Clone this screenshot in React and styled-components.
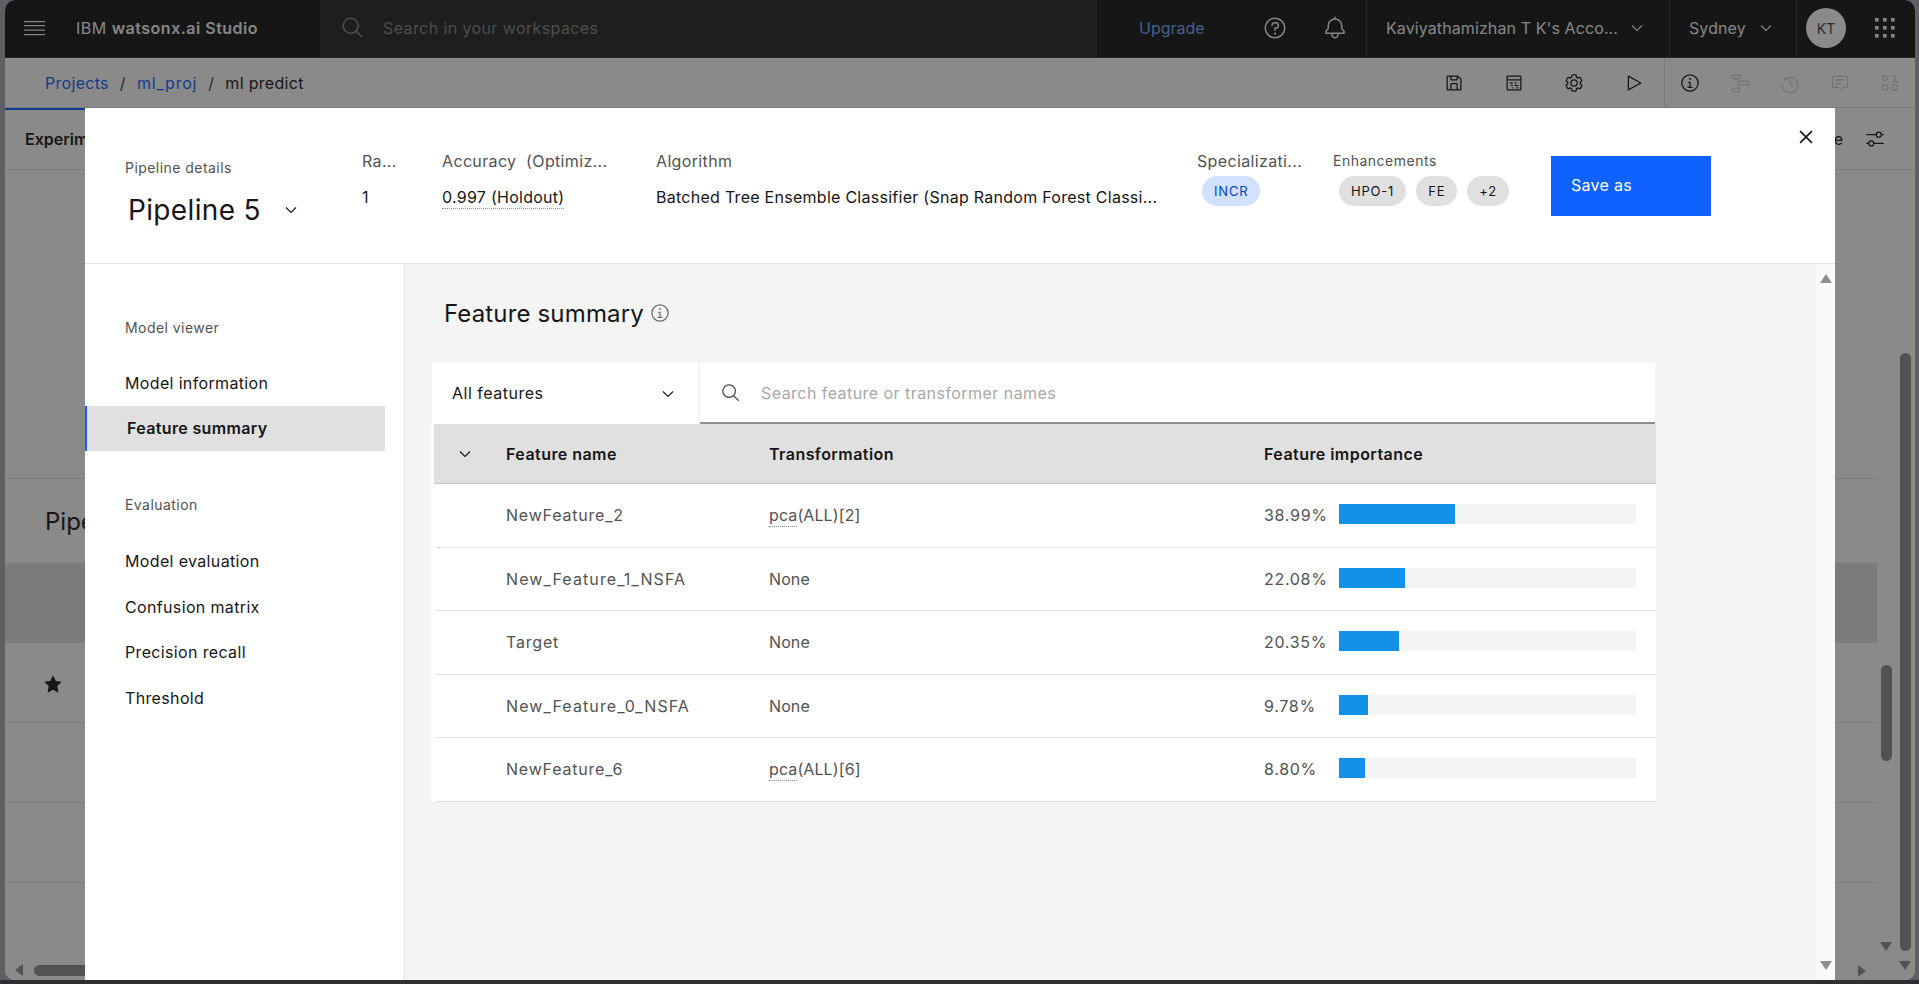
import React from 'react'
import styled, { createGlobalStyle } from 'styled-components'

const GlobalStyle = createGlobalStyle`
  html, body {
    margin: 0;
    padding: 0;
    background: #2f2f33;
    font-family: Inter, Roboto, "Liberation Sans", sans-serif;
    color: #161616;
    overflow: hidden;
  }
  * { box-sizing: border-box; }
`

/* ---------- page behind the dialog ---------- */

const Shell = styled.div`
  width: 1919px;
  height: 980px;
  padding-left: 5px;
  padding-right: 4px;
  background: #5e5e64;
`
const Window = styled.div`
  position: relative;
  height: 980px;
  background: #fff;
  border-radius: 10px 10px 10px 10px;
  overflow: hidden;
`
const TopBar = styled.header`
  display: flex;
  height: 58px;
  background: #161616;
  border-bottom: 1px solid #393939;
  color: #f4f4f4;
`
const Brand = styled.div`
  display: flex;
  align-items: center;
  flex: none;
  width: 315px;
  padding: 0 0 1px 19px;
  gap: 31px;
  font-size: 16px;
  letter-spacing: 0.5px;
  b { font-weight: 600; }
`
const GlobalSearch = styled.div`
  display: flex;
  align-items: center;
  flex: none;
  width: 777px;
  gap: 18px;
  padding: 0 0 1px 21px;
  background: #262626;
  font-size: 16px;
  letter-spacing: 0.4px;
  color: #868686;
`
const Actions = styled.div`
  display: flex;
  align-items: center;
  flex: none;
  width: 269px;
  padding: 0 0 1px 42px;
`
const Upgrade = styled.a`
  width: 106px;
  font-size: 16px;
  color: #78a9ff;
`
const BarButton = styled.span`
  display: flex;
  align-items: center;
  justify-content: center;
  width: 60px;
`
const BarCell = styled.div`
  display: flex;
  align-items: center;
  justify-content: space-between;
  flex: none;
  width: ${p => p.$width}px;
  padding: 0 ${p => p.$right}px 1px 19px;
  border-left: 1px solid #393939;
  font-size: 16px;
  letter-spacing: 0.1px;
`
const UserCell = styled.div`
  display: flex;
  align-items: center;
  flex: 1;
  padding: 0 0 1px 9px;
  border-left: 1px solid #393939;
  svg { margin-left: 29px; }
`
const Avatar = styled.span`
  display: flex;
  align-items: center;
  justify-content: center;
  width: 40px;
  height: 40px;
  border-radius: 50%;
  background: #fff;
  color: #404040;
  font-size: 14px;
`
const SubBar = styled.div`
  display: flex;
  align-items: center;
  justify-content: space-between;
  height: 50px;
  padding-left: 40px;
  border-bottom: 1px solid #e0e0e0;
`
const Breadcrumb = styled.nav`
  display: flex;
  gap: 11px;
  font-size: 16px;
  letter-spacing: 0.3px;
`
const Crumb = styled.a`
  color: #0f62fe;
`
const ProjectCrumb = styled(Crumb)`
  letter-spacing: 0.8px;
`
const Slash = styled.span`
  color: #404040;
`
const Tools = styled.div`
  display: flex;
  align-items: center;
  height: 100%;
`
const ToolGroup = styled.div`
  display: flex;
  height: 100%;
  ${p => p.$divided && 'border-left: 1px solid #e0e0e0;'}
`
const Tool = styled.span`
  display: flex;
  align-items: center;
  justify-content: center;
  width: ${p => p.$width}px;
  color: ${p => (p.$disabled ? '#d0d0d0' : '#161616')};
`
const TabRow = styled.div`
  display: flex;
  align-items: center;
  justify-content: space-between;
  height: 62px;
  padding: 0 30px 0 20px;
  border-bottom: 1px solid #e0e0e0;
`
const TabLabel = styled.div`
  font-size: 16px;
  font-weight: 600;
`
const ActiveLine = styled.div`
  position: absolute;
  left: 0;
  top: 108px;
  width: 90px;
  height: 2px;
  background: #0f62fe;
`
const TabTools = styled.div`
  display: flex;
  align-items: center;
  gap: 22px;
  font-size: 16px;
  color: #161616;
`
const Overview = styled.div`
  height: 309px;
  margin-right: 38px;
  border-bottom: 1px solid #e0e0e0;
`
const Leaderboard = styled.section`
  margin-right: 38px;
`
const BoardTitle = styled.h2`
  height: 84px;
  margin: 0;
  padding: 27px 0 0 40px;
  font-size: 24px;
  font-weight: 400;
  line-height: 32px;
`
const BoardHead = styled.div`
  height: 80px;
  background: #e0e0e0;
`
const BoardRow = styled.div`
  display: flex;
  align-items: center;
  height: 80px;
  padding: 3px 0 0 38px;
  border-bottom: 1px solid #e0e0e0;
`
const Thumb = styled.div`
  position: absolute;
  background: #8e8e8e;
  border-radius: 6px;
  left: ${p => p.$x}px;
  top: ${p => p.$y}px;
  width: ${p => p.$w}px;
  height: ${p => p.$h}px;
`
const Arrow = styled.span`
  position: absolute;
  left: ${p => p.$x}px;
  top: ${p => p.$y}px;
  width: 0;
  height: 0;
  ${p => p.$dir === 'down' && 'border-left: 6px solid transparent; border-right: 6px solid transparent; border-top: 9px solid #8e8e8e;'}
  ${p => p.$dir === 'left' && 'border-top: 6px solid transparent; border-bottom: 6px solid transparent; border-right: 8px solid #8e8e8e;'}
  ${p => p.$dir === 'right' && 'border-top: 6px solid transparent; border-bottom: 6px solid transparent; border-left: 8px solid #8e8e8e;'}
`
const Overlay = styled.div`
  position: absolute;
  inset: 0;
  background: rgba(22, 22, 22, 0.5);
`

/* ---------- dialog ---------- */

const Modal = styled.div`
  position: absolute;
  left: 80px;
  right: 80px;
  top: 108px;
  bottom: 0;
  display: flex;
  flex-direction: column;
  background: #fff;
`
const ModalHead = styled.div`
  position: relative;
  display: flex;
  align-items: flex-start;
  height: 156px;
  padding: 41px 0 0 40px;
  border-bottom: 1px solid #e0e0e0;
`
const Column = styled.div`
  width: ${p => p.$width}px;
  flex: none;
`
const PipelineColumn = styled(Column)`
  padding-top: 10px;
`
const SmallLabel = styled.div`
  font-size: 14px;
  line-height: 18px;
  letter-spacing: 0.45px;
  color: #525252;
`
const PipelineName = styled.div`
  display: flex;
  align-items: center;
  gap: 22px;
  margin-top: 15px;
  padding-left: 3px;
  font-size: 28px;
  line-height: 36px;
  letter-spacing: 0.35px;
`
const HeadLabel = styled.div`
  font-size: 16px;
  line-height: 24px;
  letter-spacing: 0.35px;
  color: #525252;
  white-space: nowrap;
`
const EnhanceLabel = styled(HeadLabel)`
  font-size: 14px;
  letter-spacing: 0.5px;
`
const HeadValue = styled.div`
  margin-top: 12px;
  font-size: 16px;
  line-height: 24px;
  letter-spacing: 0.27px;
  white-space: nowrap;
`
const Dotted = styled.span`
  padding-bottom: 1px;
  border-bottom: 1px dotted #8d8d8d;
`
const Pills = styled.div`
  display: flex;
  gap: 10px;
  margin: 3px 0 0 ${p => p.$indent}px;
`
const Pill = styled.span`
  display: flex;
  align-items: center;
  height: 30px;
  padding: 0 12px;
  border-radius: 15px;
  font-size: 13px;
  letter-spacing: 0.8px;
  background: ${p => (p.$blue ? '#d0e2ff' : '#e0e0e0')};
  color: ${p => (p.$blue ? '#0043ce' : '#161616')};
`
const SaveButton = styled.button`
  display: block;
  width: 160px;
  height: 60px;
  margin-top: 7px;
  padding: 0 0 2px 20px;
  border: 0;
  background: #0f62fe;
  color: #fff;
  font: inherit;
  font-size: 16px;
  letter-spacing: 0.3px;
  text-align: left;
`
const CloseButton = styled.span`
  position: absolute;
  right: 16px;
  top: 16px;
  display: flex;
`
const ModalBody = styled.div`
  flex: 1;
  display: flex;
  min-height: 0;
`
const SideNav = styled.nav`
  width: 320px;
  flex: none;
  padding-top: 55px;
  border-right: 1px solid #e0e0e0;
`
const NavGroup = styled(SmallLabel)`
  padding-left: 40px;
  margin-top: ${p => p.$top}px;
  margin-bottom: ${p => p.$bottom}px;
`
const NavItem = styled.div`
  display: flex;
  align-items: center;
  width: 300px;
  height: 45.6px;
  padding-left: 40px;
  font-size: 16px;
  letter-spacing: 0.35px;
  ${p => p.$active && `
    background: #e0e0e0;
    border-left: 2px solid #0f62fe;
    font-weight: 600;
  `}
`
const Main = styled.main`
  flex: 1;
  display: flex;
  background: #f4f4f4;
`
const Content = styled.div`
  flex: 1;
  padding: 34px 0 0 27px;
`
const Title = styled.h1`
  display: flex;
  align-items: center;
  gap: 6px;
  margin: 0 0 33px 12px;
  font-size: 24px;
  font-weight: 400;
  line-height: 32px;
  letter-spacing: 0.15px;
  svg { margin-top: -3px; color: #6f6f6f; }
`
const FilterBar = styled.div`
  display: flex;
  gap: 2px;
  width: 1223px;
  height: 61px;
`
const Dropdown = styled.div`
  display: flex;
  align-items: center;
  justify-content: space-between;
  width: 266px;
  padding: 0 22px 2px 20px;
  background: #fff;
  font-size: 16px;
  letter-spacing: 0.5px;
  svg { margin-top: 2px; }
`
const SearchBox = styled.div`
  flex: 1;
  display: flex;
  align-items: center;
  gap: 20px;
  padding-left: 21px;
  background: #fff;
  border-bottom: 2px solid #8d8d8d;
  font-size: 16px;
  letter-spacing: 0.45px;
  color: #a8a8a8;
  svg { color: #525252; }
`
const Table = styled.div`
  width: 1225px;
  margin-left: -1px;
  background: #fff;
`
const HeadRow = styled.div`
  display: grid;
  grid-template-columns: 72px 263px 495px 1fr;
  align-items: center;
  height: 60px;
  margin-left: 3px;
  background: #e0e0e0;
  border-bottom: 1px solid #c6c6c6;
  font-size: 16px;
  font-weight: 600;
  letter-spacing: 0.45px;
  svg { margin-left: 23px; }
`
const RowWrap = styled.div`
  padding-left: 5px;
`
const Row = styled.div`
  display: grid;
  grid-template-columns: 70px 263px 495px 1fr;
  align-items: center;
  height: 63.5px;
  border-bottom: 1px solid #e0e0e0;
  font-size: 16px;
  color: #525252;
`
const Cell = styled.div`
  grid-column: ${p => p.$col};
`
const NameCell = styled(Cell)`
  letter-spacing: ${p => (p.$long ? '1.1px' : '0.8px')};
`
const TransformCell = styled(Cell)`
  letter-spacing: 0.1px;
`
const Importance = styled(Cell)`
  display: flex;
  align-items: center;
`
const Percent = styled.span`
  width: 75px;
  letter-spacing: 0.7px;
`
const Track = styled.div`
  width: 297px;
  height: 20px;
  margin-bottom: 2px;
  background: #f4f4f4;
`
const Fill = styled.div`
  height: 100%;
  background: #1192e8;
`
const ScrollTrack = styled.div`
  display: flex;
  flex-direction: column;
  justify-content: space-between;
  align-items: center;
  width: 19px;
  flex: none;
  padding: 10px 0 10px;
  background: #fafafa;
`
const ScrollUp = styled.span`
  width: 0;
  height: 0;
  border-left: 6.5px solid transparent;
  border-right: 6.5px solid transparent;
  border-bottom: 9px solid #8f8f8f;
`
const ScrollDown = styled.span`
  width: 0;
  height: 0;
  border-left: 6.5px solid transparent;
  border-right: 6.5px solid transparent;
  border-top: 9px solid #8f8f8f;
`

/* ---------- icons ---------- */

const Icon = ({ size = 20, children, ...rest }) => (
  <svg width={size} height={size} viewBox="0 0 32 32" fill="currentColor" {...rest}>{children}</svg>
)
const Chevron = ({ size = 16 }) => (
  <svg width={size} height={size} viewBox="0 0 16 16" fill="none" stroke="currentColor" strokeWidth="1.1">
    <path d="M3 5.5l5 5 5-5" />
  </svg>
)
const MenuIcon = () => (
  <svg width="21" height="16" viewBox="0 0 21 16" fill="#f4f4f4" style={{ flex: 'none' }}>
    <rect y="1" width="21" height="1.2" /><rect y="5" width="21" height="1.2" />
    <rect y="9.5" width="21" height="1.2" /><rect y="14" width="21" height="1.2" />
  </svg>
)
const SearchIcon = ({ size }) => (
  <Icon size={size} style={{ flex: 'none' }}>
    <path d="M29 27.586l-7.552-7.552a11.018 11.018 0 1 0-1.414 1.414L27.586 29zM4 13a9 9 0 1 1 9 9 9.01 9.01 0 0 1-9-9z" />
  </Icon>
)
const HelpIcon = () => (
  <Icon size={24}>
    <path d="M16 2a14 14 0 1 0 14 14A14 14 0 0 0 16 2zm0 26a12 12 0 1 1 12-12 12 12 0 0 1-12 12z" />
    <circle cx="16" cy="23.5" r="1.5" />
    <path d="M17 8h-1.5a4.49 4.49 0 0 0-4.5 4.5v.5h2v-.5a2.5 2.5 0 0 1 2.5-2.5H17a2.5 2.5 0 0 1 0 5h-2v4.5h2V17a4.5 4.5 0 0 0 0-9z" />
  </Icon>
)
const BellIcon = () => (
  <Icon size={24}>
    <path d="M28.707 19.293 26 16.586V13a10.014 10.014 0 0 0-9-9.95V1h-2v2.05A10.014 10.014 0 0 0 6 13v3.586l-2.707 2.707A1 1 0 0 0 3 20v3a1 1 0 0 0 1 1h7v.777a5.152 5.152 0 0 0 4.5 5.199A5.006 5.006 0 0 0 21 25v-1h7a1 1 0 0 0 1-1v-3a1 1 0 0 0-.293-.707zM19 25a3 3 0 0 1-6 0v-1h6zm8-3H5v-1.586l2.707-2.707A1 1 0 0 0 8 17v-4a8 8 0 0 1 16 0v4a1 1 0 0 0 .293.707L27 20.414z" />
  </Icon>
)
const GridIcon = () => (
  <svg width="20" height="20" viewBox="0 0 20 20" fill="#f4f4f4">
    {[0, 8, 16].map(y => [0, 8, 16].map(x => <rect key={`${x}-${y}`} x={x} y={y} width="3.6" height="3.6" />))}
  </svg>
)
const SaveIcon = () => (
  <Icon>
    <path d="M27.71 9.29l-5-5A1 1 0 0 0 22 4H6a2 2 0 0 0-2 2v20a2 2 0 0 0 2 2h20a2 2 0 0 0 2-2V10a1 1 0 0 0-.29-.71zM12 6h8v4h-8zm8 20h-8v-8h8zm2 0v-8a2 2 0 0 0-2-2h-8a2 2 0 0 0-2 2v8H6V6h4v4a2 2 0 0 0 2 2h8a2 2 0 0 0 2-2V6.41l4 4V26z" />
  </Icon>
)
const TableCalcIcon = () => (
  <Icon>
    <path d="M26 4H6a2 2 0 0 0-2 2v20a2 2 0 0 0 2 2h20a2 2 0 0 0 2-2V6a2 2 0 0 0-2-2zm0 2v4H6V6zM6 26V12h20v14z" />
    <rect x="9" y="15" width="5" height="2" /><rect x="17" y="15" width="3" height="2" />
    <rect x="11" y="19" width="3" height="2" /><rect x="17" y="19" width="6" height="2" />
    <rect x="13" y="23" width="2" height="1.5" /><rect x="19" y="23" width="4" height="1.5" />
  </Icon>
)
const GearIcon = () => (
  <Icon>
    <path d="M27 16.76c0-.25 0-.5 0-.76s0-.51 0-.77l1.92-1.68A2 2 0 0 0 29.3 11L27 7a2 2 0 0 0-1.73-1 2 2 0 0 0-.64.1l-2.43.82a11.35 11.35 0 0 0-1.31-.75l-.51-2.52a2 2 0 0 0-2-1.61h-4.68a2 2 0 0 0-2 1.61l-.51 2.52a11.48 11.48 0 0 0-1.32.75l-2.38-.86A2 2 0 0 0 6.79 6a2 2 0 0 0-1.73 1L2.7 11a2 2 0 0 0 .41 2.51L5 15.24c0 .25 0 .5 0 .76s0 .51 0 .77l-1.92 1.68A2 2 0 0 0 2.7 21l2.36 4a2 2 0 0 0 1.73 1 2 2 0 0 0 .64-.1l2.43-.82a11.35 11.35 0 0 0 1.31.75l.51 2.52a2 2 0 0 0 2 1.61h4.72a2 2 0 0 0 2-1.61l.51-2.52a11.48 11.48 0 0 0 1.32-.75l2.42.82a2 2 0 0 0 .64.1 2 2 0 0 0 1.73-1l2.28-4a2 2 0 0 0-.41-2.51zM25.15 24l-3.43-1.16a8.86 8.86 0 0 1-2.71 1.57L18.36 28h-4.72l-.71-3.55a9.36 9.36 0 0 1-2.7-1.57L6.79 24l-2.36-4 2.72-2.4a8.9 8.9 0 0 1 0-3.13L4.43 12l2.36-4 3.43 1.16a8.86 8.86 0 0 1 2.71-1.57L13.64 4h4.72l.71 3.55a9.36 9.36 0 0 1 2.7 1.57L25.21 8l2.36 4-2.72 2.4a8.9 8.9 0 0 1 0 3.13L27.57 20z" />
    <path d="M16 22a6 6 0 1 1 6-6 5.94 5.94 0 0 1-6 6zm0-10a3.91 3.91 0 0 0-4 4 3.91 3.91 0 0 0 4 4 3.91 3.91 0 0 0 4-4 3.91 3.91 0 0 0-4-4z" />
  </Icon>
)
const PlayIcon = () => (
  <Icon>
    <path d="M7 28a1 1 0 0 1-1-1V5a1 1 0 0 1 1.482-.876l20 11a1 1 0 0 1 0 1.752l-20 11A1 1 0 0 1 7 28zM8 6.69v18.62L24.925 16z" />
  </Icon>
)
const InfoIcon = ({ size = 20 }) => (
  <Icon size={size}>
    <path d="M17 22v-8h-4v2h2v6h-3v2h8v-2h-3z" />
    <path d="M16 8a1.5 1.5 0 1 0 1.5 1.5A1.5 1.5 0 0 0 16 8z" />
    <path d="M16 30a14 14 0 1 1 14-14 14 14 0 0 1-14 14zm0-26a12 12 0 1 0 12 12A12 12 0 0 0 16 4z" />
  </Icon>
)
const TreeIcon = () => (
  <Icon fill="none" stroke="currentColor" strokeWidth="2">
    <rect x="4" y="3" width="12" height="6" rx="1.5" />
    <rect x="13" y="13" width="17" height="6" rx="1.5" />
    <rect x="4" y="24" width="11" height="6" rx="1.5" />
  </Icon>
)
const HistoryIcon = () => (
  <Icon fill="none" stroke="currentColor" strokeWidth="2">
    <path d="M5.5 6l2.7 4.8L13 8.5" />
    <path d="M7.6 10.2A12.5 12.5 0 1 1 3.8 17" />
    <path d="M16 9v8l5 5" />
  </Icon>
)
const CommentIcon = () => (
  <Icon fill="none" stroke="currentColor" strokeWidth="2">
    <path d="M17.7 28l2.8-5H26a2 2 0 0 0 2-2V7a2 2 0 0 0-2-2H6a2 2 0 0 0-2 2v14a2 2 0 0 0 2 2h8" />
    <path d="M9 11h14M9 17h8" />
  </Icon>
)
const BinaryIcon = () => (
  <Icon fill="none" stroke="currentColor" strokeWidth="2">
    <circle cx="8" cy="8" r="4" />
    <path d="M19 5h5v9M19 14h10" />
    <circle cx="8" cy="23" r="4.5" />
    <circle cx="23.5" cy="23" r="4.5" />
  </Icon>
)
const SlidersIcon = () => (
  <Icon size={20} fill="none" stroke="currentColor" strokeWidth="2">
    <path d="M2 9h16M26 9h4M2 23h4M14 23h16" />
    <circle cx="22" cy="9" r="4" />
    <circle cx="10" cy="23" r="4" />
  </Icon>
)
const StarIcon = () => (
  <Icon size={20}>
    <path d="M16 2l4.3 9 9.7 1.4-7 6.9L24.6 30 16 25l-8.6 5L9 19.3l-7-6.9L11.7 11z" />
  </Icon>
)
const CloseIcon = () => (
  <Icon size={26}>
    <path d="M24 9.4 22.6 8 16 14.6 9.4 8 8 9.4l6.6 6.6L8 22.6 9.4 24l6.6-6.6 6.6 6.6 1.4-1.4-6.6-6.6L24 9.4z" />
  </Icon>
)

const features = [
  { name: 'NewFeature_2', transform: '(ALL)[2]', pca: true, value: 38.99 },
  { name: 'New_Feature_1_NSFA', transform: 'None', value: 22.08 },
  { name: 'Target', transform: 'None', value: 20.35 },
  { name: 'New_Feature_0_NSFA', transform: 'None', value: 9.78 },
  { name: 'NewFeature_6', transform: '(ALL)[6]', pca: true, value: 8.8 },
]

export default function App() {
  return (
    <Shell>
      <GlobalStyle />
      <Window>
        <TopBar>
          <Brand>
            <MenuIcon />
            <span>IBM <b>watsonx.ai Studio</b></span>
          </Brand>
          <GlobalSearch>
            <SearchIcon size={24} />
            <span>Search in your workspaces</span>
          </GlobalSearch>
          <Actions>
            <Upgrade>Upgrade</Upgrade>
            <BarButton><HelpIcon /></BarButton>
            <BarButton><BellIcon /></BarButton>
          </Actions>
          <BarCell $width={303} $right={24}>
            <span>Kaviyathamizhan T K's Acco...</span>
            <Chevron />
          </BarCell>
          <BarCell $width={127} $right={22}>
            <span>Sydney</span>
            <Chevron />
          </BarCell>
          <UserCell>
            <Avatar>KT</Avatar>
            <GridIcon />
          </UserCell>
        </TopBar>
        <SubBar>
          <Breadcrumb>
            <Crumb>Projects</Crumb><Slash>/</Slash>
            <ProjectCrumb>ml_proj</ProjectCrumb><Slash>/</Slash>
            <span>ml predict</span>
          </Breadcrumb>
          <Tools>
            <ToolGroup>
              <Tool $width={60}><SaveIcon /></Tool>
              <Tool $width={60}><TableCalcIcon /></Tool>
              <Tool $width={60}><GearIcon /></Tool>
              <Tool $width={60}><PlayIcon /></Tool>
            </ToolGroup>
            <ToolGroup $divided>
              <Tool $width={50}><InfoIcon /></Tool>
              <Tool $width={50} $disabled><TreeIcon /></Tool>
              <Tool $width={50} $disabled><HistoryIcon /></Tool>
              <Tool $width={50} $disabled><CommentIcon /></Tool>
              <Tool $width={50} $disabled><BinaryIcon /></Tool>
            </ToolGroup>
          </Tools>
        </SubBar>
        <TabRow>
          <TabLabel>Experiment summary</TabLabel>
          <TabTools>
            <span>Compare</span>
            <SlidersIcon />
          </TabTools>
        </TabRow>
        <ActiveLine />
        <Overview />
        <Leaderboard>
          <BoardTitle>Pipeline leaderboard</BoardTitle>
          <BoardHead />
          <BoardRow><StarIcon /></BoardRow>
          <BoardRow />
          <BoardRow />
        </Leaderboard>
        <Thumb $x={1876} $y={665} $w={11} $h={96} />
        <Thumb $x={1895} $y={353} $w={11} $h={598} />
        <Thumb $x={29} $y={965} $w={70} $h={11} />
        <Arrow $dir="down" $x={1875} $y={942} />
        <Arrow $dir="down" $x={1894} $y={961} />
        <Arrow $dir="right" $x={1853} $y={965} />
        <Arrow $dir="left" $x={10} $y={964} />
        <Overlay />

        <Modal>
          <ModalHead>
            <PipelineColumn $width={237}>
              <SmallLabel>Pipeline details</SmallLabel>
              <PipelineName>Pipeline 5 <Chevron /></PipelineName>
            </PipelineColumn>
            <Column $width={80}>
              <HeadLabel>Ra...</HeadLabel>
              <HeadValue>1</HeadValue>
            </Column>
            <Column $width={214}>
              <HeadLabel>Accuracy &nbsp;(Optimiz...</HeadLabel>
              <HeadValue><Dotted>0.997 (Holdout)</Dotted></HeadValue>
            </Column>
            <Column $width={541}>
              <HeadLabel>Algorithm</HeadLabel>
              <HeadValue>Batched Tree Ensemble Classifier (Snap Random Forest Classi...</HeadValue>
            </Column>
            <Column $width={136}>
              <HeadLabel>Specializati...</HeadLabel>
              <Pills $indent={5}><Pill $blue>INCR</Pill></Pills>
            </Column>
            <Column $width={218}>
              <EnhanceLabel>Enhancements</EnhanceLabel>
              <Pills $indent={6}>
                <Pill>HPO-1</Pill>
                <Pill>FE</Pill>
                <Pill>+2</Pill>
              </Pills>
            </Column>
            <SaveButton>Save as</SaveButton>
            <CloseButton><CloseIcon /></CloseButton>
          </ModalHead>
          <ModalBody>
            <SideNav>
              <NavGroup $top={0} $bottom={23}>Model viewer</NavGroup>
              <NavItem>Model information</NavItem>
              <NavItem $active>Feature summary</NavItem>
              <NavGroup $top={45} $bottom={24}>Evaluation</NavGroup>
              <NavItem>Model evaluation</NavItem>
              <NavItem>Confusion matrix</NavItem>
              <NavItem>Precision recall</NavItem>
              <NavItem>Threshold</NavItem>
            </SideNav>
            <Main>
              <Content>
                <Title>Feature summary <InfoIcon size={20} /></Title>
                <FilterBar>
                  <Dropdown>All features <Chevron /></Dropdown>
                  <SearchBox>
                    <SearchIcon size={20} />
                    <span>Search feature or transformer names</span>
                  </SearchBox>
                </FilterBar>
                <Table>
                  <HeadRow>
                    <Chevron />
                    <Cell>Feature name</Cell>
                    <Cell>Transformation</Cell>
                    <Cell>Feature importance</Cell>
                  </HeadRow>
                  {features.map(f => (
                    <RowWrap key={f.name}>
                      <Row>
                        <NameCell $col={2} $long={f.name.length > 12}>{f.name}</NameCell>
                        <TransformCell $col={3}>
                          {f.pca ? <><Dotted>pca</Dotted>{f.transform}</> : f.transform}
                        </TransformCell>
                        <Importance $col={4}>
                          <Percent>{f.value.toFixed(2)}%</Percent>
                          <Track><Fill style={{ width: `${f.value}%` }} /></Track>
                        </Importance>
                      </Row>
                    </RowWrap>
                  ))}
                </Table>
              </Content>
              <ScrollTrack>
                <ScrollUp />
                <ScrollDown />
              </ScrollTrack>
            </Main>
          </ModalBody>
        </Modal>
      </Window>
    </Shell>
  )
}
